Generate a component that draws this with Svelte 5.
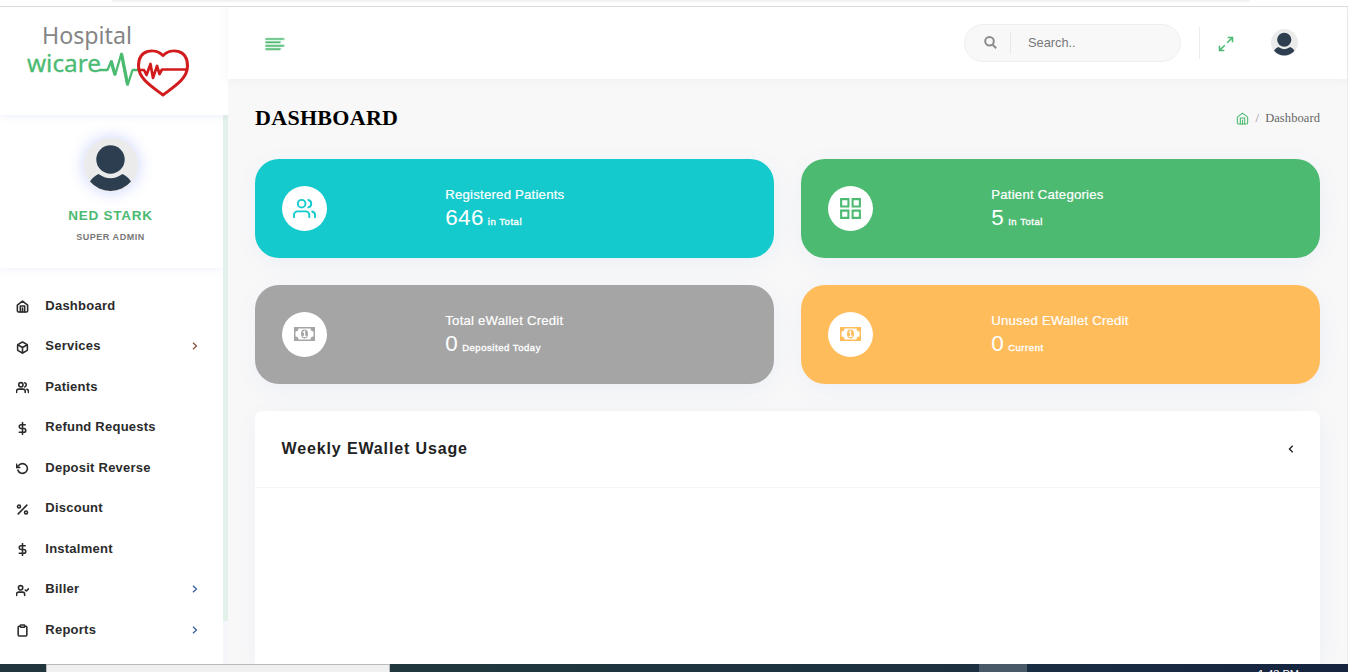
<script>
  const menu = [
    { label: 'Dashboard', icon: 'home' },
    { label: 'Services', icon: 'box', sub: true, tone: '#7d4c36' },
    { label: 'Patients', icon: 'users' },
    { label: 'Refund Requests', icon: 'dollar' },
    { label: 'Deposit Reverse', icon: 'rotate' },
    { label: 'Discount', icon: 'percent' },
    { label: 'Instalment', icon: 'dollar' },
    { label: 'Biller', icon: 'usercheck', sub: true, tone: '#31599b' },
    { label: 'Reports', icon: 'clipboard', sub: true, tone: '#31599b' }
  ];
  const cards = [
    { title: 'Registered Patients', value: '646', note: 'in Total', color: '#15cacd', icon: 'users' },
    { title: 'Patient Categories', value: '5', note: 'In Total', color: '#4cba71', icon: 'grid' },
    { title: 'Total eWallet Credit', value: '0', note: 'Deposited Today', color: '#a5a5a5', icon: 'money' },
    { title: 'Unused EWallet Credit', value: '0', note: 'Current', color: '#ffbc5b', icon: 'money' }
  ];
</script>

{#snippet icon(name, size, stroke)}
  <svg class="icon" width={size} height={size} viewBox="0 0 24 24" fill="none" stroke="currentColor" stroke-width={stroke} stroke-linecap="round" stroke-linejoin="round">
    {#if name === 'home'}
      <path d="M2.500 9.500 12 2l9.500 7.500V20a2 2 0 0 1-2 2h-15a2 2 0 0 1-2-2z" /><path d="M8 22V11h8v11M12 15v7" />
    {:else if name === 'box'}
      <path d="M21 16V8a2 2 0 0 0-1-1.730l-7-4a2 2 0 0 0-2 0l-7 4A2 2 0 0 0 3 8v8a2 2 0 0 0 1 1.730l7 4a2 2 0 0 0 2 0l7-4A2 2 0 0 0 21 16z" /><path d="M3.270 6.960 12 12.010l8.730-5.050M12 22.080V12" />
    {:else if name === 'users'}
      <path d="M17 21v-2a4 4 0 0 0-4-4H5a4 4 0 0 0-4 4v2" /><circle cx="9" cy="7" r="4" /><path d="M23 21v-2a4 4 0 0 0-3-3.870M16 3.130a4 4 0 0 1 0 7.750" />
    {:else if name === 'dollar'}
      <path d="M12 1v22M17 5H9.500a3.500 3.500 0 0 0 0 7h5a3.500 3.500 0 0 1 0 7H6" />
    {:else if name === 'rotate'}
      <path d="M1 4v6h6" /><path d="M3.510 15a9 9 0 1 0 2.130-9.360L1 10" />
    {:else if name === 'percent'}
      <path d="M20 4 4 20" /><circle cx="5.500" cy="6.500" r="2.800" /><circle cx="18.500" cy="17.500" r="2.800" />
    {:else if name === 'usercheck'}
      <path d="M16 21v-2a4 4 0 0 0-4-4H5a4 4 0 0 0-4 4v2" /><circle cx="8.500" cy="7" r="4" /><path d="m17 11 2 2 4-4" />
    {:else if name === 'clipboard'}
      <path d="M16 4h2a2 2 0 0 1 2 2v14a2 2 0 0 1-2 2H6a2 2 0 0 1-2-2V6a2 2 0 0 1 2-2h2" /><rect x="8" y="2" width="8" height="4" rx="1" />
    {:else if name === 'grid'}
      <path stroke-linejoin="miter" d="M3 3h7v7H3zM14 3h7v7h-7zM14 14h7v7h-7zM3 14h7v7H3z" />
    {/if}
  </svg>
{/snippet}

{#snippet avatar(size)}
  <svg width={size} height={size} viewBox="0 0 54 54">
    <circle cx="27" cy="27" r="27" fill="#ebebeb" />
    <circle cx="26.500" cy="21.500" r="14.200" fill="#2c3e50" />
    <path d="M14.500 36Q26.500 44.500 38.500 36Q44 38.500 47 43.500A27 27 0 0 1 6 43.500Q9 38.500 14.500 36Z" fill="#2c3e50" />
  </svg>
{/snippet}

<div class="screen">
  <div class="chrome"><div class="omnibox"></div></div>

  <div class="app">
    <aside>
      <div class="brand">
        <svg width="170" height="76" viewBox="0 0 170 76">
          <text x="17" y="20" font-size="23.500" fill="#858585" textLength="90" lengthAdjust="spacingAndGlyphs">Hospital</text>
          <text x="2" y="47.500" font-size="24" fill="#4cbb72" stroke="#4cbb72" stroke-width=".3" textLength="74" lengthAdjust="spacingAndGlyphs">wicare</text>
          <path d="M74 46h8.500l4-9.500 3.500 15 6.500-22.500 6 32.500 5-15.500h6" fill="none" stroke="#4cbb72" stroke-width="2.300" stroke-linejoin="bevel" />
          <path d="M86 37.500l4 13M96.500 30l6 30" fill="none" stroke="#4cbb72" stroke-width="3.300" />
          <path d="M138 31.500C130.500 24 113.500 24.500 113.500 42c0 13 13.500 20.500 24.500 29C149 62.500 162.500 55 162.500 42c0-17.500-17-18-24.500-10.500z" fill="none" stroke="#d21b1d" stroke-width="3" stroke-linejoin="round" />
          <path d="M113 46h6l2.500 5 4-11 2.500 14 4-12 2.500 8 2.500-4.500h26" fill="none" stroke="#d21b1d" stroke-width="2.700" stroke-linejoin="round" />
        </svg>
      </div>
      <div class="side">
        <div class="sidemain">
          <div class="profile">
            <div class="photo">{@render avatar(54)}</div>
            <div class="name">NED STARK</div>
            <div class="role">SUPER ADMIN</div>
          </div>
          <nav>
            {#each menu as m}
              <div class="item">
                {@render icon(m.icon, 13, 2.9)}
                <span>{m.label}</span>
                {#if m.sub}
                  <svg class="chev" style:color={m.tone} width="6" height="8" viewBox="0 0 6 8"><path d="M1 .7 4.500 4 1 7.300" fill="none" stroke="currentColor" stroke-width="1.200" /></svg>
                {/if}
              </div>
            {/each}
          </nav>
        </div>
        <div class="track"><div class="thumb"></div></div>
      </div>
    </aside>

    <div class="content">
      <header>
        <svg class="burger" width="20" height="14" viewBox="0 0 20 14"><path d="M1 2h17.500M1 5.300h14M1 8.800h17.500M1 12.100h14" stroke="#a5ddb8" stroke-width="2.600" stroke-linecap="round" /><path d="M1 2h17.500M1 5.300h14M1 8.800h17.500M1 12.100h14" stroke="#4cba71" stroke-width="1.200" /></svg>
        <div class="search">
          <svg width="14" height="14" viewBox="0 0 14 14" fill="none" stroke="#8b8b8b" stroke-width="2"><circle cx="5.500" cy="5.300" r="4.300" /><path d="m8.500 8.500 3.700 3.700" /></svg>
          <span>Search..</span>
        </div>
        <div class="sep"></div>
        <svg class="expand" width="16" height="16" viewBox="0 0 16 16" fill="none" stroke="#4cba71" stroke-width="1.600"><path d="M9.700 1.500h4.800v4.800M14.500 1.500 9.200 6.800M6.300 14.500H1.500V9.700M1.500 14.500l5.300-5.300" /></svg>
        <div class="me">{@render avatar(27)}</div>
      </header>

      <main>
        <div class="titlebar">
          <h1>DASHBOARD</h1>
          <div class="crumbs"><i>{@render icon('home', 13, 2)}</i><b>/</b><span>Dashboard</span></div>
        </div>
        <div class="cards">
          {#each cards as c}
            <section class="card" style:background={c.color}>
              <div class="disc" style:color={c.color}>
                {#if c.icon === 'money'}
                  <svg class="money" width="21" height="14" viewBox="0 0 21 14"><path fill="currentColor" fill-rule="evenodd" d="M0 0h21v14H0zM4.500 1.500A3 3 0 0 1 1.500 4.500v5a3 3 0 0 1 3 3h12a3 3 0 0 1 3-3v-5a3 3 0 0 1-3-3z" /><ellipse cx="10.500" cy="7" rx="3.500" ry="4.400" fill="currentColor" /><path d="M9 5.500 10.600 4.200V9M8.800 9.400h3.600" fill="none" stroke="#fff" stroke-width="1.200" /></svg>
                {:else}
                  {@render icon(c.icon, c.icon === 'grid' ? 25 : 23, 2)}
                {/if}
              </div>
              <div class="stat">
                <div class="label">{c.title}</div>
                <div class="num">{c.value}<small>{c.note}</small></div>
              </div>
            </section>
          {/each}
        </div>
        <section class="panel">
          <div class="panelhead">
            <h2>Weekly EWallet Usage</h2>
            <svg width="6" height="8" viewBox="0 0 6 8"><path d="M4.700.8 1.500 4l3.200 3.200" fill="none" stroke="#222" stroke-width="1.400" /></svg>
          </div>
        </section>
      </main>
    </div>
  </div>

  <div class="taskbar">
    <div class="start"></div><div class="find"></div><div class="tasks"></div><div class="active"></div>
    <div class="tray"><span>1:43 PM</span></div>
  </div>
</div>

<style>
  :global(body) { margin: 0; overflow: hidden; }
  * { box-sizing: border-box; }
  svg { display: block; flex: none; }
  .screen { height: 672px; display: grid; grid-template-rows: 7px 657px 8px; font-family: "Liberation Sans", Arial, sans-serif; background: #fff; overflow: hidden; }
  .chrome { border-bottom: 1px solid #d9dbdb; padding: 0 98px 0 112px; overflow: hidden; }
  .omnibox { height: 2px; background: #f1f2f3; border-radius: 0 0 8px 8px; }
  .app { display: grid; grid-template-columns: 228px 1fr; min-height: 0; overflow: hidden; background: #f8f8f8; }
  aside { display: flex; flex-direction: column; background: #fff; min-height: 0; overflow: hidden; }
  .brand { height: 108px; flex: none; padding: 17px 0 0 25px; box-shadow: 0 0 8px rgba(89, 102, 210, .15); position: relative; }
  .brand svg { overflow: visible; }
  .brand text { font-family: "Noto Sans", "Open Sans", sans-serif; }
  .side { flex: 1; min-height: 0; display: flex; }
  .sidemain { width: 223px; overflow: hidden; }
  .track { width: 5px; background: #f5f6fb; }
  .thumb { height: 506px; background: #e3f1eb; }
  .profile { height: 153px; padding-top: 23px; box-shadow: 0 0 8px rgba(89, 102, 210, .12); text-align: center; padding-right: 2px; }
  .photo { width: 54px; height: 54px; margin: 0 auto; border-radius: 50%; box-shadow: 0 0 15px rgba(68, 102, 242, .3); }
  .name { margin-top: 15px; font: bold 13.500px/17px "Liberation Sans", sans-serif; letter-spacing: .75px; color: #4cba71; }
  .role { margin-top: 7px; font: bold 9px/12px "Liberation Sans", sans-serif; letter-spacing: .55px; color: #777; }
  nav { padding-top: 17px; }
  .item { height: 40.500px; display: flex; align-items: center; padding: 0 25px 0 16px; color: #2b2b2b; }
  .item .icon { margin: 3px 16.300px 0 0; }
  .item span { font-size: 13px; font-weight: bold; letter-spacing: .24px; flex: 1; white-space: nowrap; }
  .chev { margin-top: 1px; }
  .content { min-width: 0; border-right: 1px solid #ececec; display: flex; flex-direction: column; }
  header { height: 72px; flex: none; background: #fff; box-shadow: 0 0 10px rgba(89, 102, 122, .08); display: flex; align-items: center; padding: 0 49px 0 37px; position: relative; }
  .burger { margin-top: 2px; }
  .search { margin-left: auto; width: 217px; height: 38px; border: 1px solid #efefef; border-radius: 19px; background: #f8f8f8; display: flex; align-items: center; padding-left: 19px; }
  .search span { margin-left: 12px; padding-left: 17px; line-height: 22px; border-left: 1px solid #e6e8f0; font-size: 12.800px; color: #777; }
  .sep { width: 1px; height: 32px; background: #ececf0; margin-left: 18px; }
  .expand { margin: 2px 0 0 18px; }
  .me { margin: -1px 0 0 37px; }
  main { padding: 0 27px 0 27px; display: flex; flex-direction: column; flex: 1; min-height: 0; }
  .titlebar { height: 80px; flex: none; display: flex; align-items: center; justify-content: space-between; padding-bottom: 3px; }
  h1 { margin: 0; font: bold 22px/26px "Liberation Serif", serif; letter-spacing: .3px; color: #000; }
  .crumbs { display: flex; align-items: center; font: 12.500px/16px "Liberation Serif", serif; color: #666; letter-spacing: .08px; margin-top: 1px; }
  .crumbs i { color: #4cba71; }
  .crumbs b { font-weight: normal; margin: 0 6px 0 7px; color: #8a8f94; }
  .cards { display: grid; grid-template-columns: 519px 519px; gap: 27px; flex: none; }
  .card { height: 99px; border-radius: 24px; color: #fff; display: flex; padding: 27px; box-shadow: 1px 5px 24px rgba(68, 102, 242, .06); }
  .disc { width: 45px; height: 45px; border-radius: 50%; background: #fff; display: grid; place-items: center; }
  .money { margin: -2px 1px 0 0; }
  .stat { margin-left: 118.300px; }
  .label { font-size: 13.200px; line-height: 17px; letter-spacing: .21px; -webkit-text-stroke: .2px currentColor; }
  .num { font-size: 22.500px; line-height: 29px; letter-spacing: .3px; }
  small { font-size: 9.500px; font-weight: normal; margin-left: 4px; letter-spacing: .55px; -webkit-text-stroke: .35px currentColor; }
  .panel { margin-top: 27px; flex: 1; background: #fff; border-radius: 7px 7px 0 0; box-shadow: 1px 5px 24px rgba(68, 102, 242, .06); }
  .panelhead { height: 77px; border-bottom: 1px solid #f5f5f7; padding: 0 26px 0 26.500px; display: flex; align-items: center; justify-content: space-between; }
  h2 { margin: 0; font-size: 16px; letter-spacing: .87px; color: #222; }
  .taskbar { display: grid; grid-template-columns: 46px 344px 589px 48px 1fr; background: #1e3444; overflow: hidden; position: relative; }
  .start { background: #20353e; }
  .find { background: #f0f0f0; border: 1px solid #b9b9b9; border-bottom: 0; }
  .tasks { background: linear-gradient(90deg, #20383d, #1c3041); }
  .active { background: #495967; }
  .tray { background: linear-gradient(90deg, #192d42, #16243f); padding-left: 231px; overflow: hidden; }
  .tray span { display: block; margin-top: 4px; color: #fff; font-size: 11px; line-height: 13px; white-space: nowrap; }
</style>
